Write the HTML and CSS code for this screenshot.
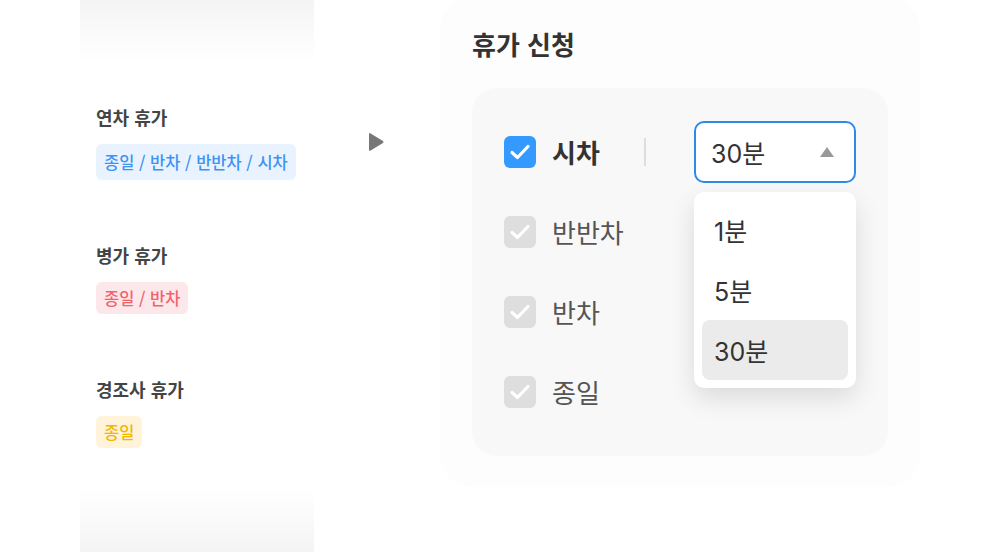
FILE: index.html
```html
<!DOCTYPE html>
<html lang="ko">
<head>
<meta charset="utf-8">
<link rel="stylesheet" href="styles.css">
</head>
<body>
<div class="page">
  <aside class="types">
    <div class="type">
      <div class="type-name">연차 휴가</div>
      <span class="tag tag-blue">종일 / 반차 / 반반차 / 시차</span>
    </div>
    <div class="type">
      <div class="type-name">병가 휴가</div>
      <span class="tag tag-red">종일 / 반차</span>
    </div>
    <div class="type">
      <div class="type-name">경조사 휴가</div>
      <span class="tag tag-yellow">종일</span>
    </div>
  </aside>

  <div class="arrow-col">
    <svg class="arrow" width="16" height="20" viewBox="0 0 16 20"><path d="M1 2.2 Q1 0.4 2.6 1.4 L15 9 Q16 10 15 11 L2.6 18.6 Q1 19.6 1 17.8 Z" fill="#777"/></svg>
  </div>

  <section class="card">
    <h1 class="card-title">휴가 신청</h1>
    <div class="options">
      <div class="row">
        <span class="check check-on">
          <svg width="22" height="18" viewBox="0 0 22 18"><path d="M3 9.5 L8.5 14.5 L19 3.5" fill="none" stroke="#fff" stroke-width="3.2" stroke-linecap="round" stroke-linejoin="round"/></svg>
        </span>
        <span class="label label-strong">시차</span>
        <span class="divider"></span>
        <div class="select-wrap">
          <div class="select">
            <span>30분</span>
            <svg width="14" height="10" viewBox="0 0 14 10"><path d="M7 0 L14 10 L0 10 Z" fill="#999"/></svg>
          </div>
          <ul class="menu">
            <li class="menu-item">1분</li>
            <li class="menu-item">5분</li>
            <li class="menu-item is-active">30분</li>
          </ul>
        </div>
      </div>
      <div class="row">
        <span class="check">
          <svg width="22" height="18" viewBox="0 0 22 18"><path d="M3 9.5 L8.5 14.5 L19 3.5" fill="none" stroke="#fff" stroke-width="3.2" stroke-linecap="round" stroke-linejoin="round"/></svg>
        </span>
        <span class="label">반반차</span>
      </div>
      <div class="row">
        <span class="check">
          <svg width="22" height="18" viewBox="0 0 22 18"><path d="M3 9.5 L8.5 14.5 L19 3.5" fill="none" stroke="#fff" stroke-width="3.2" stroke-linecap="round" stroke-linejoin="round"/></svg>
        </span>
        <span class="label">반차</span>
      </div>
      <div class="row">
        <span class="check">
          <svg width="22" height="18" viewBox="0 0 22 18"><path d="M3 9.5 L8.5 14.5 L19 3.5" fill="none" stroke="#fff" stroke-width="3.2" stroke-linecap="round" stroke-linejoin="round"/></svg>
        </span>
        <span class="label">종일</span>
      </div>
    </div>
  </section>
</div>
</body>
</html>
```

FILE: styles.css
```css
* { box-sizing: border-box; }
html, body {
  margin: 0;
  padding: 0;
  background: #fff;
  font-family: Inter, "Noto Sans CJK KR", sans-serif;
}
.page {
  width: 1000px;
  height: 552px;
  overflow: hidden;
  display: flex;
  align-items: flex-start;
  padding-left: 80px;
}
.types {
  width: 234px;
  height: 552px;
  padding: 104px 16px 0;
  display: flex;
  flex-direction: column;
  gap: 62px;
  background: linear-gradient(to bottom, #f4f4f4 0px, #fff 62px, #fff 488px, #f4f4f4 552px);
}
.type {
  display: flex;
  flex-direction: column;
  align-items: flex-start;
  gap: 14px;
}
.type-name {
  font-family: "Noto Sans CJK KR", sans-serif;
  font-size: 18px;
  line-height: 26px;
  font-weight: 700;
  color: #444;
}
.tag {
  display: inline-flex;
  align-items: center;
  height: 32px;
  padding: 0 8px;
  border-radius: 6px;
  font-family: "Noto Sans CJK KR", sans-serif;
  font-size: 16.5px;
  font-weight: 500;
}
.tag-blue { background: #e8f3ff; color: #3d92f2; height: 36px; }
.tag-red { background: #fce8ea; color: #f2626b; }
.tag-yellow { background: #fff4d9; color: #f4b400; }

.arrow-col {
  width: 126px;
  display: flex;
  justify-content: center;
  padding-top: 132px;
  padding-right: 2px;
}
.arrow { display: block; }

.card {
  width: 480px;
  height: 489px;
  margin-top: -2px;
  background: #fdfdfd;
  border-radius: 32px;
  padding: 30px 32px 0;
}
.card-title {
  margin: 0 0 28px;
  font-family: "Noto Sans CJK KR", sans-serif;
  font-size: 26px;
  line-height: 32px;
  font-weight: 700;
  color: #333;
}
.options {
  background: #f8f8f8;
  border-radius: 24px;
  padding: 32px;
  display: flex;
  flex-direction: column;
  gap: 16px;
}
.row {
  height: 64px;
  display: flex;
  align-items: center;
}
.check {
  width: 32px;
  height: 32px;
  border-radius: 6px;
  background: #dedede;
  display: flex;
  align-items: center;
  justify-content: center;
  flex-shrink: 0;
}
.check-on { background: #349aff; }
.label {
  margin-left: 16px;
  font-family: "Noto Sans CJK KR", sans-serif;
  font-size: 26px;
  line-height: 32px;
  color: #555;
}
.label-strong {
  font-weight: 700;
  color: #333;
}
.divider {
  width: 2px;
  height: 28px;
  background: #dddddd;
  margin-left: 44px;
}
.select-wrap {
  position: relative;
  margin-left: auto;
}
.select {
  width: 162px;
  height: 62px;
  border: 2px solid #2f89e6;
  border-radius: 10px;
  background: #fff;
  display: flex;
  align-items: center;
  justify-content: space-between;
  padding: 0 20px 0 15px;
  font-size: 25px;
  color: #333;
}
.menu {
  position: absolute;
  top: 71px;
  left: 0;
  width: 162px;
  margin: 0;
  padding: 8px;
  list-style: none;
  background: #fff;
  border-radius: 10px;
  box-shadow: 0 10px 26px rgba(0, 0, 0, 0.12);
  z-index: 2;
}
.menu-item {
  height: 60px;
  display: flex;
  align-items: center;
  padding: 0 12px;
  border-radius: 8px;
  font-size: 25px;
  color: #333;
}
.menu-item.is-active { background: #ebebeb; }
```
